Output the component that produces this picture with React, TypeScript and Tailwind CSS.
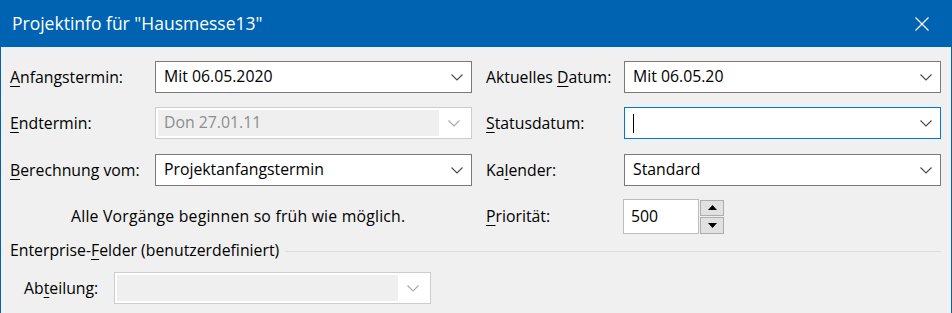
import React from "react";

const font = { fontFamily: '"Segoe UI", "Open Sans", "Noto Sans", sans-serif' };

function Chevron({ muted = false }: { muted?: boolean }) {
  return (
    <svg width="12" height="7" viewBox="0 0 12 7" className="shrink-0">
      <polyline
        points="0.5,0.5 6,6 11.5,0.5"
        fill="none"
        stroke={muted ? "#a8a8a8" : "#4a4a4a"}
        strokeWidth="1.1"
      />
    </svg>
  );
}

function Label({ pre = "", u, post }: { pre?: string; u: string; post: string }) {
  return (
    <span className="text-[15.8px] text-black whitespace-nowrap">
      {pre}
      <span className="underline underline-offset-[3px] decoration-1">{u}</span>
      {post}
    </span>
  );
}

function Combo({ value, focused = false }: { value: string; focused?: boolean }) {
  return (
    <div
      className={`flex h-[32px] w-[317px] items-center justify-between bg-white pl-[8px] pr-[8px] border ${
        focused ? "border-[#0078d7]" : "border-[#7a7a7a]"
      }`}
    >
      {focused ? (
        <span className="h-[19px] w-px bg-black" />
      ) : (
        <span className="text-[15.8px] text-black">{value}</span>
      )}
      <Chevron />
    </div>
  );
}

function DisabledCombo({ value, width }: { value?: string; width: string }) {
  return (
    <div className={`flex h-[32px] ${width} border border-[#cccccc] bg-white p-[2px]`}>
      <div className="flex flex-1 items-center bg-[#efefef] pl-[6px]">
        <span className="text-[15.8px] text-[#8d8d8d]">{value}</span>
      </div>
      <div className="flex w-[30px] items-center justify-center">
        <Chevron muted />
      </div>
    </div>
  );
}

export default function App() {
  return (
    <div style={font} className="w-[952px] h-[313px] overflow-hidden bg-[#0063b1]">
      <div className="flex h-[47px] items-center justify-between pl-[12px] pr-[23px] text-white">
        <span className="text-[17.5px]">Projektinfo für "Hausmesse13"</span>
        <svg width="14" height="14" viewBox="0 0 14 14">
          <path d="M0.5 0.5 L13.5 13.5 M13.5 0.5 L0.5 13.5" stroke="white" strokeWidth="1.2" />
        </svg>
      </div>
      <div className="mx-px h-[266px] border-t border-[#e8eef5] bg-[#f0f0f0]">
        <div className="flex flex-col">
          <div className="mt-[13px] flex h-[32px] items-center">
            <div className="w-[154px] pl-[9px]">
              <Label u="A" post="nfangstermin:" />
            </div>
            <Combo value="Mit 06.05.2020" />
            <div className="w-[152px] pl-[14px]">
              <Label pre="Aktuelles " u="D" post="atum:" />
            </div>
            <Combo value="Mit 06.05.20" />
          </div>

          <div className="mt-[14px] flex h-[32px] items-center">
            <div className="w-[154px] pl-[9px]">
              <Label u="E" post="ndtermin:" />
            </div>
            <DisabledCombo value="Don 27.01.11" width="w-[317px]" />
            <div className="w-[152px] pl-[14px]">
              <Label u="S" post="tatusdatum:" />
            </div>
            <Combo value="" focused />
          </div>

          <div className="mt-[15px] flex h-[32px] items-center">
            <div className="w-[154px] pl-[9px]">
              <Label u="B" post="erechnung vom:" />
            </div>
            <Combo value="Projektanfangstermin" />
            <div className="w-[152px] pl-[14px]">
              <Label pre="Ka" u="l" post="ender:" />
            </div>
            <Combo value="Standard" />
          </div>

          <div className="mt-[13px] flex h-[35px] items-center">
            <div className="w-[471px] pl-[70px]">
              <span className="text-[15.8px] tracking-[0.2px] text-black">
                Alle Vorgänge beginnen so früh wie möglich.
              </span>
            </div>
            <div className="w-[151px] pl-[14px]">
              <Label u="P" post="riorität:" />
            </div>
            <div className="flex h-[35px] w-[76px] items-center border border-[#bdbdbd] bg-white pl-[7px]">
              <span className="text-[15.8px] text-black">500</span>
            </div>
            <div className="ml-px flex h-[34px] w-[24px] flex-col gap-px">
              <div className="flex flex-1 items-center justify-center border border-[#adadad] bg-[#e1e1e1]">
                <svg width="9" height="5" viewBox="0 0 9 5">
                  <polygon points="0,5 4.5,0 9,5" fill="#000" />
                </svg>
              </div>
              <div className="flex flex-1 items-center justify-center border border-[#adadad] bg-[#e1e1e1]">
                <svg width="9" height="5" viewBox="0 0 9 5">
                  <polygon points="0,0 4.5,5 9,0" fill="#000" />
                </svg>
              </div>
            </div>
          </div>

          <div className="mt-[7px] flex h-[20px] items-center pl-[9px] pr-[10px]">
            <Label pre="Enterprise-" u="F" post="elder (benutzerdefiniert)" />
            <div className="ml-[6px] h-px flex-1 bg-[#dcdcdc]" />
          </div>

          <div className="mt-[11px] flex h-[32px] items-center">
            <div className="w-[113px] pl-[23px]">
              <Label pre="Ab" u="t" post="eilung:" />
            </div>
            <DisabledCombo width="w-[317px]" />
          </div>
        </div>
      </div>
    </div>
  );
}
